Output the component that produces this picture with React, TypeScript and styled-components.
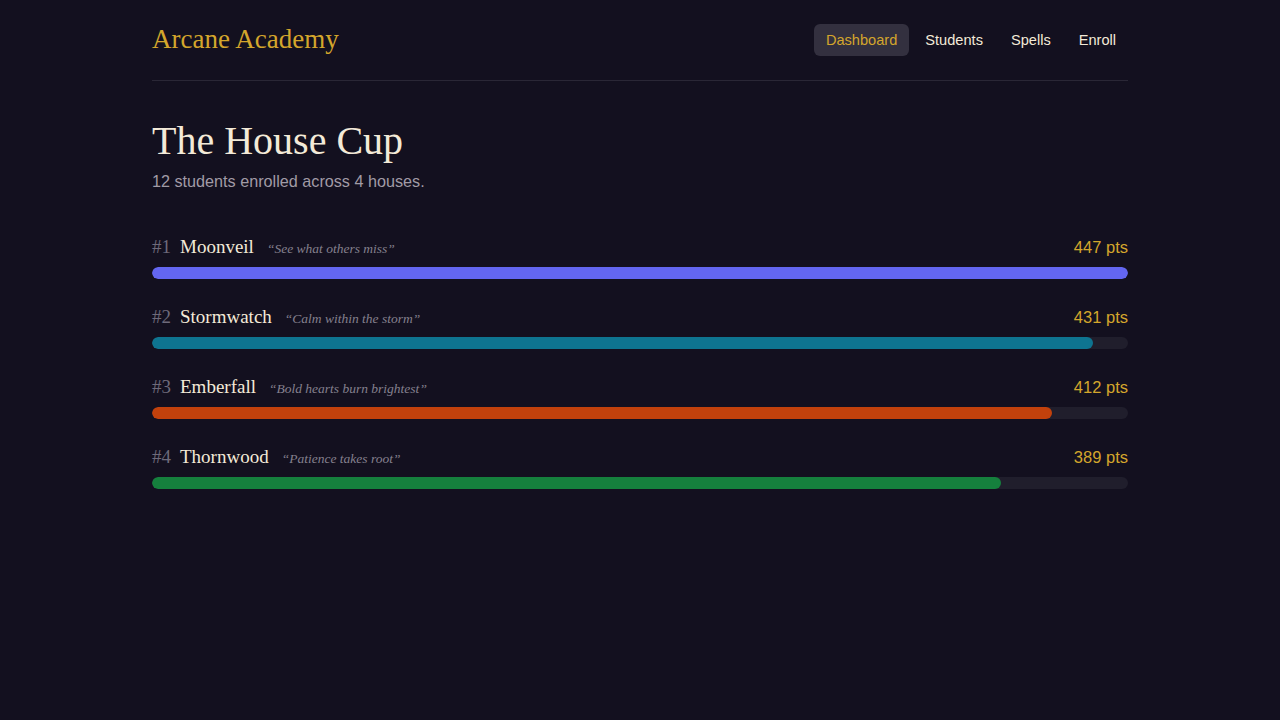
import { FC } from 'react';
import styled, { createGlobalStyle } from 'styled-components';

const GlobalStyle = createGlobalStyle`
  html, body {
    margin: 0;
    padding: 0;
    background: #13101f;
  }
  body {
    font-family: "Liberation Sans", Arial, sans-serif;
    color: #f3ead8;
  }
`;

interface House {
  name: string;
  motto: string;
  points: number;
  color: string;
}

const houses: House[] = [
  { name: 'Moonveil', motto: 'See what others miss', points: 447, color: '#6366f1' },
  { name: 'Stormwatch', motto: 'Calm within the storm', points: 431, color: '#0e7490' },
  { name: 'Emberfall', motto: 'Bold hearts burn brightest', points: 412, color: '#c2410c' },
  { name: 'Thornwood', motto: 'Patience takes root', points: 389, color: '#15803d' },
];

const serif = `"Liberation Serif", "DejaVu Serif", serif`;

const Page = styled.div`
  width: 976px;
  margin: 0 auto;
  min-height: 720px;
`;

const Header = styled.header`
  display: flex;
  align-items: center;
  justify-content: space-between;
  height: 81px;
  border-bottom: 1px solid #2a2736;
  box-sizing: border-box;
`;

const Logo = styled.div`
  font-family: ${serif};
  font-size: 27px;
  color: #d4a62c;
  margin-top: -1px;
`;

const Nav = styled.nav`
  display: flex;
  gap: 4px;
`;

const NavLink = styled.a<{ $active?: boolean }>`
  display: flex;
  align-items: center;
  height: 32px;
  padding: 0 12px;
  border-radius: 6px;
  font-size: 14.6px;
  color: ${({ $active }) => ($active ? '#d4a62c' : '#f3ead8')};
  background: ${({ $active }) => ($active ? '#33303f' : 'transparent')};
  cursor: pointer;
`;

const Main = styled.main`
  padding-top: 36px;
`;

const Title = styled.h1`
  margin: 0;
  font-family: ${serif};
  font-weight: 400;
  font-size: 40px;
  line-height: 48px;
  color: #f3ead8;
`;

const Subtitle = styled.p`
  margin: 7px 0 0;
  font-size: 16.2px;
  color: #a19ba6;
`;

const List = styled.div`
  display: flex;
  flex-direction: column;
  gap: 27px;
  margin-top: 45px;
`;

const Row = styled.div`
  display: flex;
  flex-direction: column;
  gap: 8px;
`;

const RowHead = styled.div`
  display: flex;
  align-items: baseline;
  height: 23px;
`;

const Rank = styled.span`
  font-family: ${serif};
  font-size: 19px;
  color: #6e6a7a;
  margin-right: 9px;
`;

const Name = styled.span`
  font-family: ${serif};
  font-size: 19px;
  color: #f3ead8;
  margin-right: 13px;
`;

const Motto = styled.span`
  font-family: ${serif};
  font-style: italic;
  font-size: 13.5px;
  color: #85808e;
`;

const Points = styled.span`
  margin-left: auto;
  font-size: 16.5px;
  color: #d4a62c;
`;

const Track = styled.div`
  height: 12px;
  border-radius: 6px;
  background: #201e2c;
  overflow: hidden;
`;

const Fill = styled.div<{ $color: string }>`
  height: 100%;
  border-radius: 6px;
  background: ${({ $color }) => $color};
`;

const App: FC = () => {
  const max = Math.max(...houses.map((h) => h.points));
  return (
    <>
      <GlobalStyle />
      <Page>
        <Header>
          <Logo>Arcane Academy</Logo>
          <Nav>
            <NavLink $active>Dashboard</NavLink>
            <NavLink>Students</NavLink>
            <NavLink>Spells</NavLink>
            <NavLink>Enroll</NavLink>
          </Nav>
        </Header>
        <Main>
          <Title>The House Cup</Title>
          <Subtitle>12 students enrolled across 4 houses.</Subtitle>
          <List>
            {houses.map((h, i) => (
              <Row key={h.name}>
                <RowHead>
                  <Rank>#{i + 1}</Rank>
                  <Name>{h.name}</Name>
                  <Motto>“{h.motto}”</Motto>
                  <Points>{h.points} pts</Points>
                </RowHead>
                <Track>
                  <Fill $color={h.color} style={{ width: `${(h.points / max) * 100}%` }} />
                </Track>
              </Row>
            ))}
          </List>
        </Main>
      </Page>
    </>
  );
};

export default App;
